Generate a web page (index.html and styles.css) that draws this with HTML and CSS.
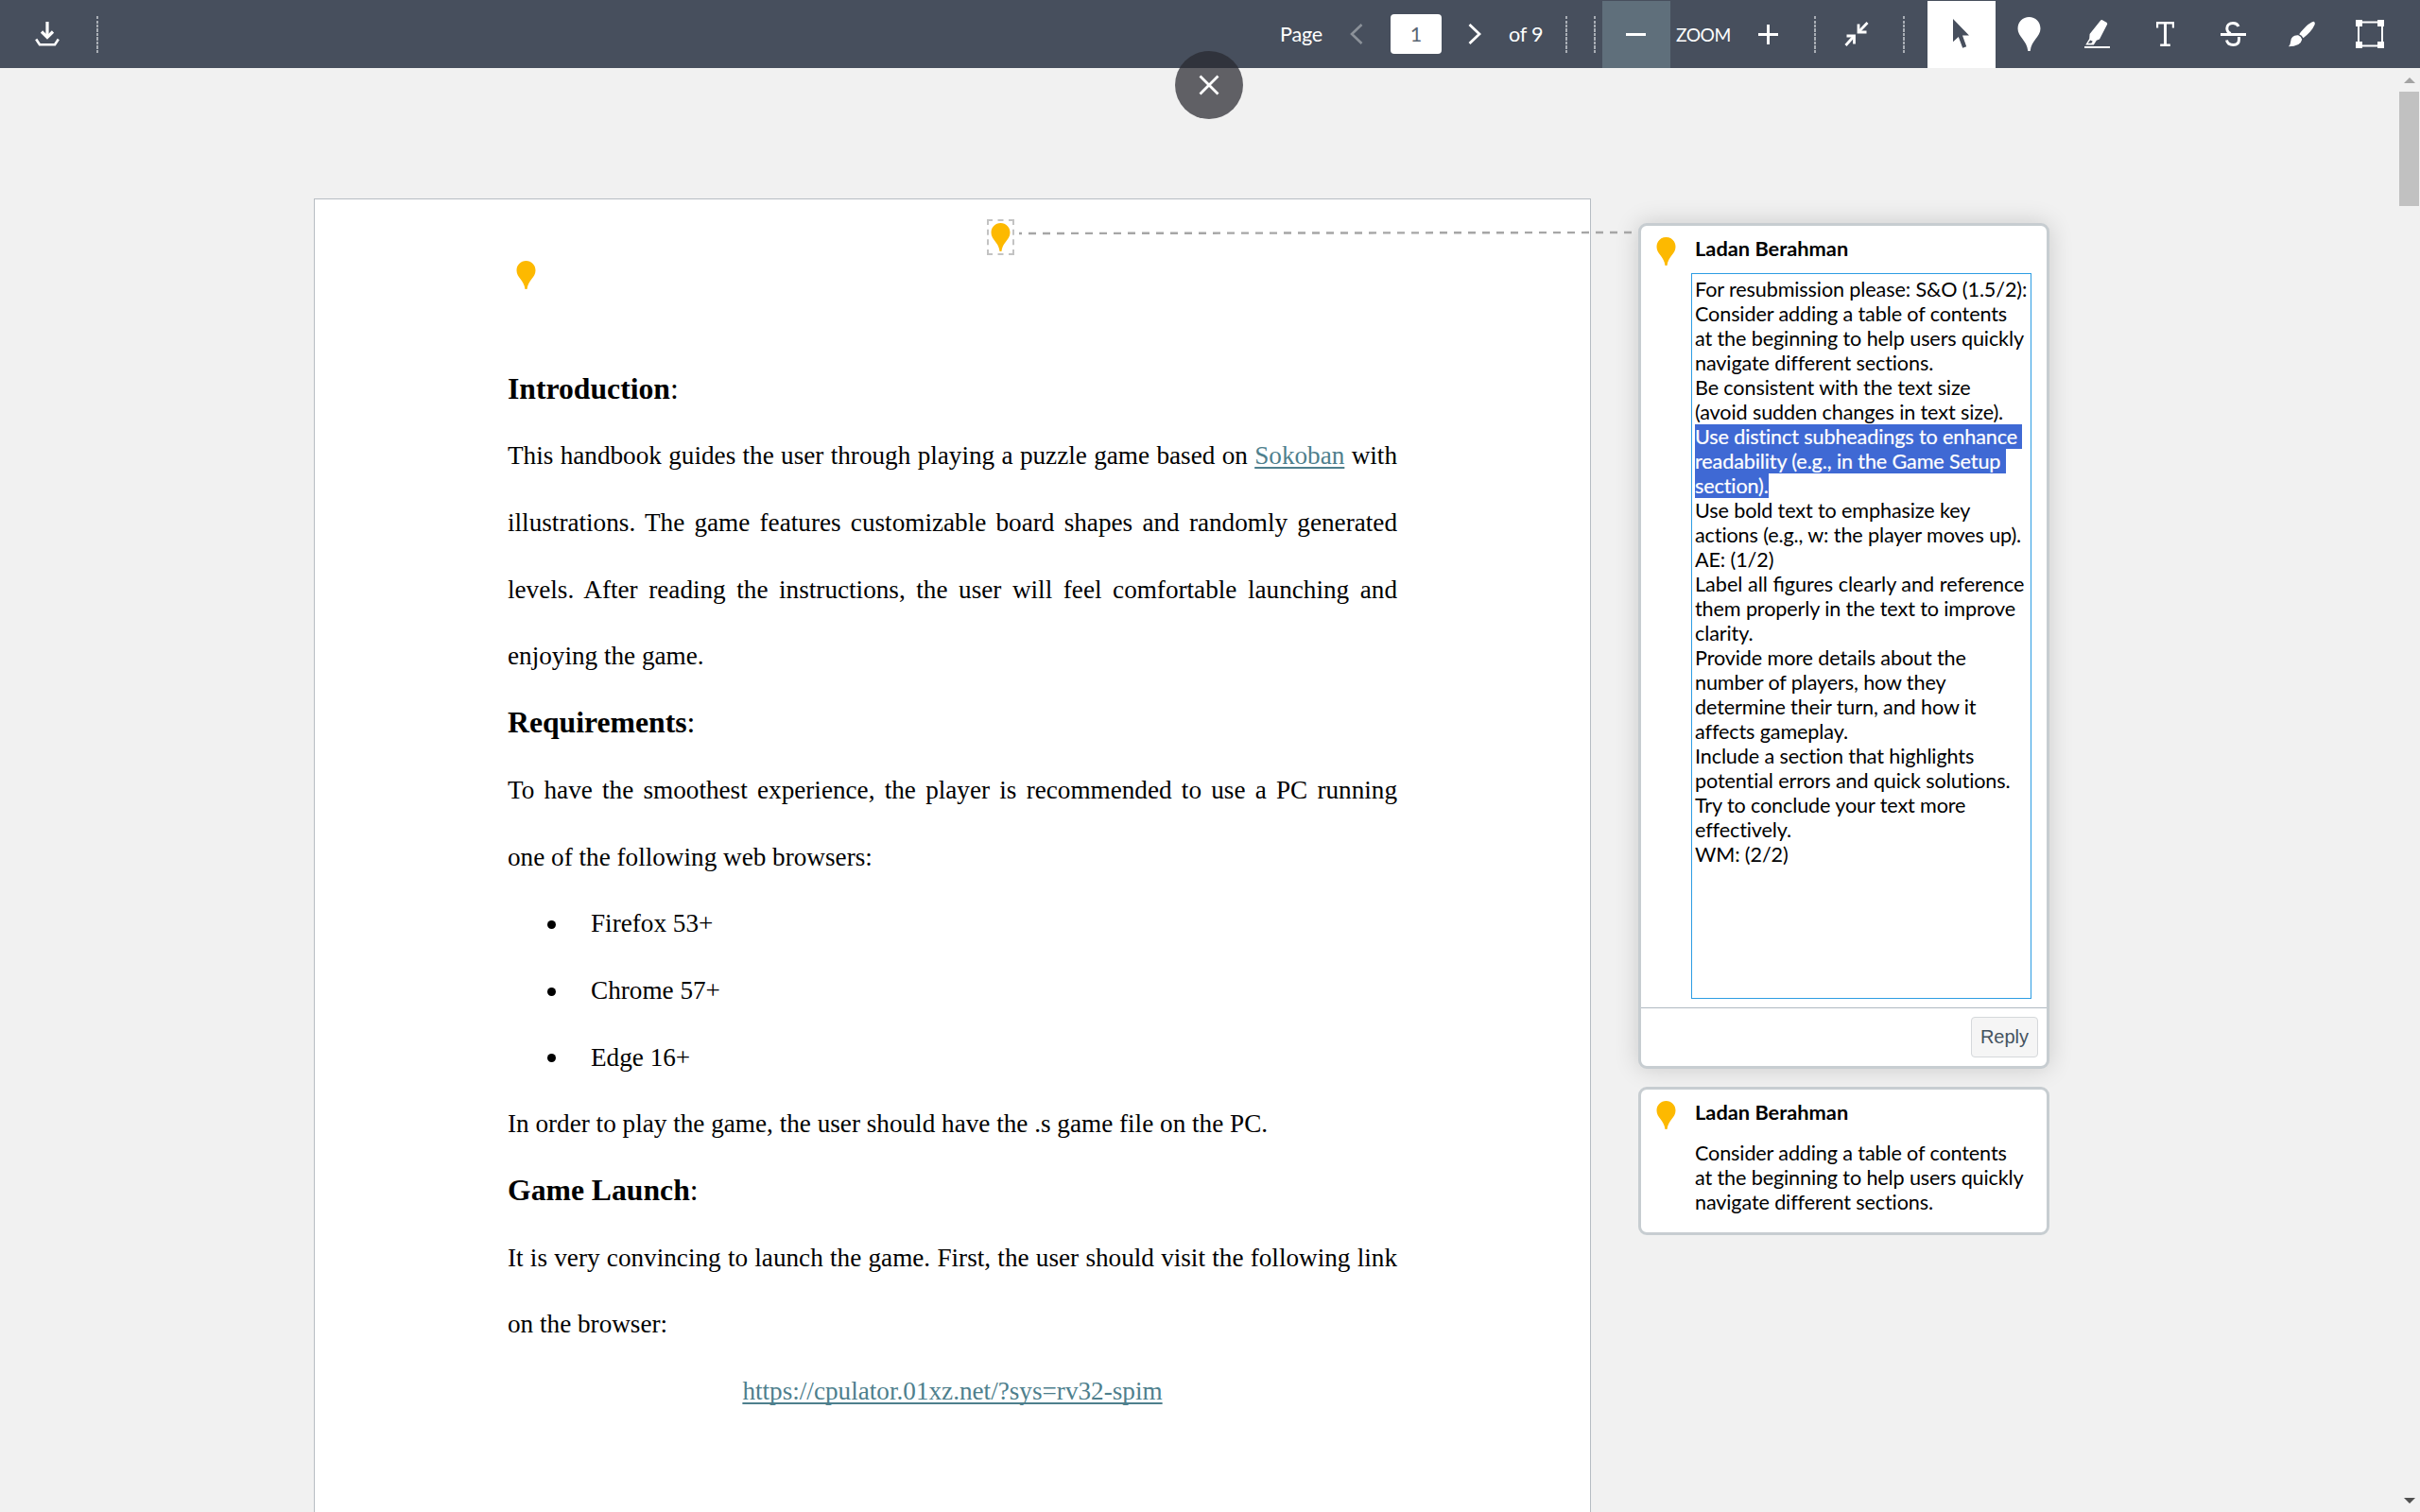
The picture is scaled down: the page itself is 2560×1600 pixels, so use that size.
FILE: index.html
```html
<!DOCTYPE html>
<html lang="en">
<head>
<meta charset="utf-8">
<title>Document viewer</title>
<link rel="stylesheet" href="styles.css">
</head>
<body>
<svg class="defs" width="0" height="0">
  <symbol id="pin" viewBox="0 0 24 36"><path d="M12 0C5.200 0 0 5.200 0 12.200c0 9 9.500 12 10.800 23.800h2.400C14.500 24.200 24 21.200 24 12.200 24 5.200 18.800 0 12 0z"/></symbol>
</svg>
<header class="toolbar">
  <button class="tool download" aria-label="Download"><svg width="26" height="26" viewBox="0 0 26 26" fill="none" stroke="#fff" stroke-width="3.200"><path d="M13 0v17"/><path d="M7 10.500l6 6 6-6"/><path d="M1.200 18.500L5 24.200h16l3.800-5.700" stroke-width="2.600"/></svg></button>
  <span class="sep"></span>
  <div class="pager">
    <span class="label page">Page</span>
    <svg width="14" height="22" viewBox="0 0 14 22" fill="none" stroke="#8b9199" stroke-width="2.600"><path d="M12.500 1L2 11l10.500 10"/></svg>
    <span class="page-input">1</span>
    <svg width="14" height="22" viewBox="0 0 14 22" fill="none" stroke="#fff" stroke-width="2.800"><path d="M1.500 1L12 11 1.500 21"/></svg>
    <span class="label total">of 9</span>
  </div>
  <span class="sep sep-a"></span>
  <span class="sep sep-b"></span>
  <button class="tool minus" aria-label="Zoom out"><svg width="22" height="22" viewBox="0 0 22 22"><path d="M0 10h21v3H0z" fill="#fff"/></svg></button>
  <span class="zoom-label">ZOOM</span>
  <button class="tool plus" aria-label="Zoom in"><svg width="22" height="22" viewBox="0 0 22 22"><path d="M0 10h9V1h3v9h9v3h-9v9H9v-9H0z" fill="#fff"/></svg></button>
  <span class="sep sep-c"></span>
  <button class="tool fit" aria-label="Fit"><svg width="26" height="26" viewBox="0 0 26 26" fill="none" stroke="#fff" stroke-width="2.800"><path d="M24.500 1L15.500 10.500"/><path d="M15 2.500V11h8.500"/><path d="M1.500 25L10 15.500"/><path d="M2.500 15h8v8.500"/></svg></button>
  <span class="sep sep-d"></span>
  <nav class="tools">
    <button class="tool active" aria-label="Select"><svg width="18" height="32" viewBox="0 0 18 32" fill="#474f5d"><path d="M0 0v24.300l5.800-5.300 4.400 11.800 4-1.600-4.200-11.700h7z"/></svg></button>
    <button class="tool half" aria-label="Point"><svg width="25" height="36" fill="#fff"><use href="#pin"/></svg></button>
    <button class="tool half" aria-label="Highlight"><svg width="27" height="30" viewBox="0 0 27 30" fill="#fff"><path fill-rule="evenodd" d="M17 .7q.8-1 2-.5l4.400 2.600q1.200.8.600 2.200L16 20.500l-3.200 1.300-3 4.600H1.200L5.200 20l.4-5zM6.200 21.500l-2.500 3.300h3.600l1.500-2z"/><path d="M0 28h27v2H0z"/></svg></button>
    <button class="tool half" aria-label="Text"><svg width="19" height="26" viewBox="0 0 19 26" fill="#fff"><path d="M0 0h19v6.500h-2.200V2.600h-5.800v20.800h3.800V26H4.200v-2.600H8V2.600H2.200v3.900H0z"/></svg></button>
    <button class="tool half" aria-label="Strikeout"><svg width="27" height="26" viewBox="0 0 27 26" fill="none" stroke="#fff" stroke-width="3"><path d="M19 5C18 2.500 16 1.500 13.200 1.500 9 1.500 6.800 4 6.800 7c0 3 1.500 4.600 4 5.500"/><path d="M6.500 19.500c.7 3.500 3.500 5 7 5 4 0 6-2.300 6-5.800V16"/><path d="M0 13.500h27"/></svg></button>
    <button class="tool" aria-label="Draw"><svg width="28" height="28" viewBox="0 0 28 28" fill="#fff"><path d="M26.500.8q2 .8 1 3.500C25 10 21 14 15.500 18.200q-1.500-3-4.300-4C16 8 21 2.500 26.500.8z"/><path d="M10.200 15.300q3.200 1 4 4.500-1.500 7.500-14.200 7.500 2-2 2.200-5.500.6-7 8-6.500z"/></svg></button>
    <button class="tool" aria-label="Area"><svg width="30" height="30" viewBox="0 0 30 30" fill="#fff"><path d="M0 0h7v7H0zM23 0h7v7h-7zM0 23h7v7H0zM23 23h7v7h-7z"/><path d="M3 2.500h25v25H3z" fill="none" stroke="#fff" stroke-width="2"/></svg></button>
  </nav>
</header>
<button class="close" aria-label="Close"><svg width="22" height="22" viewBox="0 0 22 22" stroke="#fff" stroke-width="2.800"><path d="M1.500 1.500l19 19M20.500 1.500l-19 19"/></svg></button>
<main class="viewer">
  <article class="paper">
    <svg class="marker marker-a" width="21" height="30" fill="#fdb900"><use href="#pin"/></svg>
    <div class="marker-box"><svg width="21" height="30" fill="#fdb900"><use href="#pin"/></svg></div>
    <h2>Introduction<span>:</span></h2>
    <p class="full">This handbook guides the user through playing a puzzle game based on <a>Sokoban</a> with</p>
    <p class="full">illustrations. The game features customizable board shapes and randomly generated</p>
    <p class="full">levels. After reading the instructions, the user will feel comfortable launching and</p>
    <p>enjoying the game.</p>
    <h2>Requirements<span>:</span></h2>
    <p class="full">To have the smoothest experience, the player is recommended to use a PC running</p>
    <p>one of the following web browsers:</p>
    <ul><li>Firefox 53+</li><li>Chrome 57+</li><li>Edge 16+</li></ul>
    <p>In order to play the game, the user should have the .s game file on the PC.</p>
    <h2>Game Launch<span>:</span></h2>
    <p class="full">It is very convincing to launch the game. First, the user should visit the following link</p>
    <p>on the browser:</p>
    <p class="center"><a>https://cpulator.01xz.net/?sys=rv32-spim</a></p>
  </article>
  <svg class="connector" width="650" height="5"><path d="M0 3L648 2" stroke="#a6a6a6" stroke-width="2.400" stroke-dasharray="8 7" stroke-dashoffset="5"/></svg>
  <aside class="comments">
    <section class="card selected">
      <div class="head"><svg width="21" height="30" fill="#fdb900"><use href="#pin"/></svg><b>Ladan Berahman</b></div>
      <div class="editor">For resubmission please: S&amp;O (1.5/2):<br>Consider adding a table of contents<br>at the beginning to help users quickly<br>navigate different sections.<br>Be consistent with the text size<br>(avoid sudden changes in text size).<br><mark>Use distinct subheadings to enhance&nbsp;</mark><br><mark>readability (e.g., in the Game Setup&nbsp;</mark><br><mark>section).</mark><br>Use bold text to emphasize key<br>actions (e.g., w: the player moves up).<br>AE: (1/2)<br><span class="liga">Label all figures clearly and reference</span><br>them properly in the text to improve<br>clarity.<br>Provide more details about the<br>number of players, how they<br>determine their turn, and how it<br>affects gameplay.<br>Include a section that highlights<br>potential errors and quick solutions.<br>Try to conclude your text more<br>effectively.<br>WM: (2/2)</div>
      <div class="foot"><button class="reply">Reply</button></div>
    </section>
    <section class="card">
      <div class="head"><svg width="21" height="30" fill="#fdb900"><use href="#pin"/></svg><b>Ladan Berahman</b></div>
      <div class="body">Consider adding a table of contents<br>at the beginning to help users quickly<br>navigate different sections.</div>
    </section>
  </aside>
  <div class="scrollbar"><i class="up"></i><i class="thumb"></i><i class="down"></i></div>
</main>
</body>
</html>
```
FILE: styles.css
```css
* { box-sizing: border-box; }
body {
  margin: 0;
  width: 2560px;
  height: 1600px;
  overflow: hidden;
  position: relative;
  display: flex;
  flex-direction: column;
  background: #f1f1f1;
  font-family: "Lato", sans-serif;
  font-size: 21.600px;
}
button { border: 0; padding: 0; margin: 0; background: none; }
.defs { position: absolute; }

/* toolbar */
.toolbar {
  height: 72px;
  flex: none;
  display: flex;
  align-items: center;
  background: #474f5d;
  color: #fff;
}
.tool {
  width: 72px;
  height: 71px;
  margin-top: 1px;
  padding-bottom: 1px;
  flex: none;
  display: flex;
  align-items: center;
  justify-content: center;
}
.tool.half { padding-right: 1px; }
.download { margin-left: 14px; }
.sep {
  flex: none;
  width: 2px;
  height: 39px;
  background: repeating-linear-gradient(#a9aeb5 0 3px, transparent 3px 4.500px);
}
.download + .sep { margin-left: 16px; }
.pager { display: flex; align-items: center; margin-left: 1250px; width: 302px; flex: none; }
.pager > * { flex: none; }
.label { white-space: nowrap; letter-spacing: -.2px; }
.page { width: 74px; }
.total { margin-left: 29px; }
.page-input {
  width: 54px;
  height: 42px;
  margin: 0 28px 0 29px;
  border-radius: 4px;
  background: #fff;
  color: #5a6673;
  display: flex;
  align-items: center;
  justify-content: center;
}
.sep-b { margin-left: 28px; }
.minus { background: #5f6f7b; margin-left: 7px; }
.zoom-label { font-size: 19.200px; letter-spacing: -.5px; width: 68px; padding-left: 6px; }
.sep-c { margin-left: 12px; }
.fit { margin-left: 7px; }
.sep-d { margin-left: 13px; }
.tools { display: flex; margin-left: 24px; }
.active { background: #fff; }
.close {
  position: absolute;
  left: 1243px;
  top: 54px;
  width: 72px;
  height: 72px;
  border-radius: 50%;
  background: rgba(40, 40, 47, .72);
  display: flex;
  align-items: center;
  justify-content: center;
}

/* document */
.viewer { position: relative; flex: none; height: 1528px; display: flex; align-items: flex-start; overflow: hidden; }
.paper {
  position: relative;
  flex: none;
  width: 1351px;
  height: 1390px;
  margin: 138px 0 0 332px;
  padding: 165.600px 204px 0 204px;
  border: 1px solid #b7bdc3;
  border-bottom: 0;
  background: #fff;
  font-family: "Liberation Serif", serif;
  font-size: 27.200px;
  line-height: 70.700px;
  color: #000;
}
.paper h2 { margin: 0; font-size: 31.700px; line-height: 70.700px; }
.paper h2 span { font-weight: 400; }
.paper p { margin: 0; white-space: nowrap; }
.paper .full { white-space: normal; text-align: justify; text-align-last: justify; }
.paper .center { text-align: center; }
.paper a {
  color: #4e7f8d;
  text-decoration: underline 2px;
  text-underline-offset: 3px;
  text-decoration-skip-ink: none;
}
.paper ul { margin: 0; padding: 0 0 0 88px; list-style: none; }
.paper li { display: flex; align-items: center; }
.paper li::before { content: ""; width: 9px; height: 9px; border-radius: 50%; background: #000; margin: 2px 37px 0 -46px; }
.marker { position: absolute; }
.marker-a { left: 213px; top: 65px; }
.marker-box {
  position: absolute;
  left: 711px;
  top: 21px;
  width: 29px;
  height: 38px;
  border: 2px dashed #c3c3c3;
  display: flex;
  align-items: center;
  justify-content: center;
}
.connector { position: absolute; left: 1078px; top: 172px; }

/* comments */
.comments { flex: none; width: 435px; margin: 164px 0 0 50px; display: flex; flex-direction: column; gap: 19px; }
.card {
  border: 3px solid #c7cdd1;
  border-radius: 9px;
  background: #fff;
  line-height: 26px;
  height: 157px;
  font-variant-ligatures: none;
}
.card.selected { height: 895px; box-shadow: 0 0 26px rgba(0, 0, 0, .16); }
.head { display: flex; padding: 12px 0 0 16px; height: 50px; }
.head b { margin: -1px 0 0 20px; font-size: 21.800px; }
.body { padding: 4px 0 0 57px; white-space: nowrap; letter-spacing: -.13px; }
.liga { font-variant-ligatures: normal; letter-spacing: 0; }
.editor {
  width: 360px;
  height: 768px;
  margin-left: 53px;
  padding: 3px 0 0 3px;
  border: 1px solid #2d9de3;
  white-space: nowrap;
  letter-spacing: -.12px;
}
.editor mark { background: #3f69d4; color: #fff; display: inline-block; height: 26px; vertical-align: top; -webkit-text-stroke: .2px #fff; }
.foot {
  height: 67px;
  margin-top: 9px;
  border-top: 1px solid #b0bac2;
  display: flex;
  justify-content: flex-end;
  padding: 9px 9px 0 0;
}
.reply {
  width: 71px;
  height: 43px;
  border: 1px solid #d5d8db;
  border-radius: 4px;
  background: #f5f5f5;
  color: #45535f;
  font: 20px "Liberation Sans", sans-serif;
}

/* scrollbar */
.scrollbar {
  position: absolute;
  right: 0;
  top: 0;
  width: 23px;
  height: 1528px;
  background: #f1f1f1;
  display: flex;
  flex-direction: column;
  align-items: center;
}
.up { margin-top: 10px; border: 6px solid transparent; border-top: 0; border-bottom: 6px solid #a3a3a3; }
.thumb { margin-top: 9px; width: 21px; height: 121px; background: #c1c1c1; }
.down { margin-top: auto; margin-bottom: 9px; border: 6px solid transparent; border-bottom: 0; border-top: 6px solid #505050; }
```
